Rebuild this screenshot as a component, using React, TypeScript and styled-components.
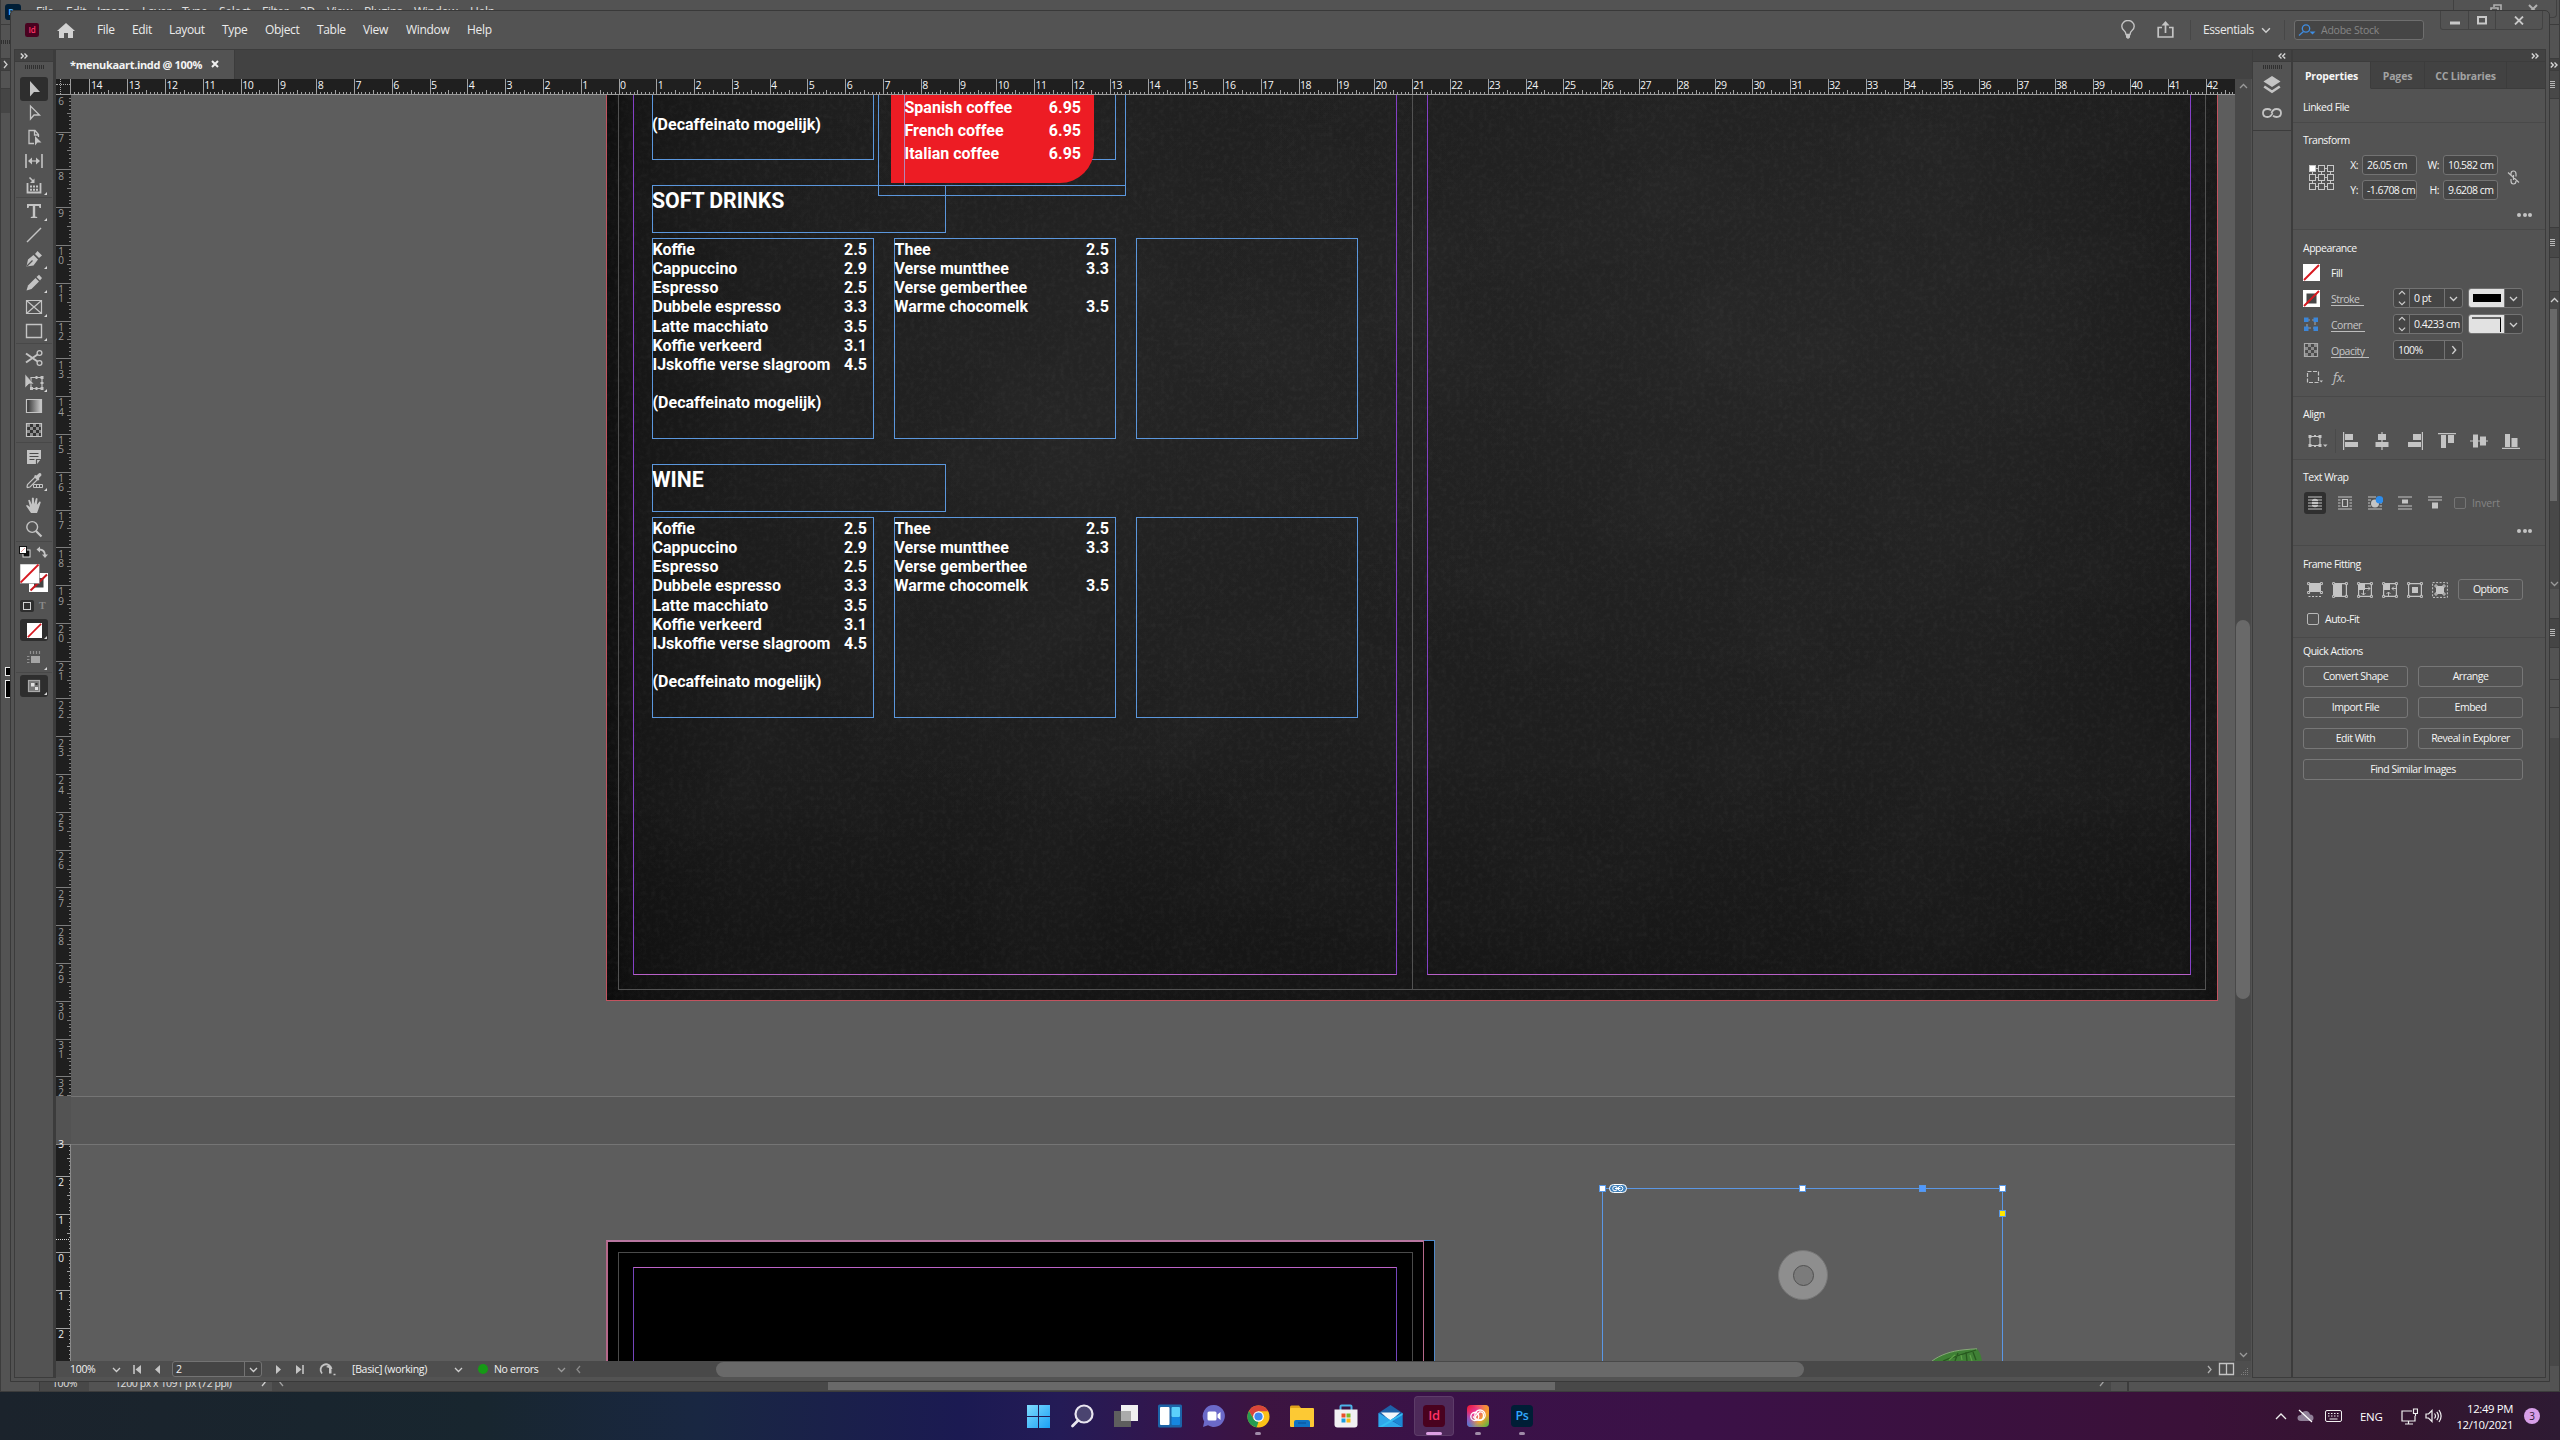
import React from 'react';
import styled, { createGlobalStyle, css } from 'styled-components';

const UI = `"Open Sans", "Noto Sans", sans-serif`;
const LINE = '#3c3c3c';
const PANEL = '#535353';
const DARK = '#424242';
const GLYPH = '#c4c4c4';
const BLUE = '#5b97dd';
const CM = 37.795;

const Global = createGlobalStyle`
  html, body { margin: 0; padding: 0; background: #1a2230; }
  body { width: 2560px; height: 1440px; overflow: hidden; font-family: ${UI}; }
  *, *::before, *::after { box-sizing: border-box; }
  svg { display: block; flex: none; }
`;

const Desktop = styled.div`
  position: relative;
  width: 2560px;
  height: 1440px;
  overflow: hidden;
  display: flex;
  flex-direction: column;
`;

/* ---------- shared ---------- */

const Ico = ({ w = 18, h, vb, children }: { w?: number; h?: number; vb?: string; children: React.ReactNode }) => (
  <svg width={w} height={h ?? w} viewBox={vb ?? `0 0 ${w} ${h ?? w}`} fill="none" stroke={GLYPH} strokeWidth="1.2">
    {children}
  </svg>
);

const Chevron = ({ dir = 'down', w = 9, color = '#cfcfcf' }: { dir?: 'down' | 'up' | 'left' | 'right'; w?: number; color?: string }) => {
  const d = { down: 'M1 3l3.5 3.5L8 3', up: 'M1 6l3.5-3.5L8 6', left: 'M6 1L3 4.5 6 8', right: 'M3 1l3 3.5L3 8' }[dir];
  return (
    <svg width={w} height={w} viewBox="0 0 9 9" fill="none" stroke={color} strokeWidth="1.3">
      <path d={d} />
    </svg>
  );
};

const DoubleChevron = ({ flip = false }: { flip?: boolean }) => (
  <svg width="8" height="6" viewBox="0 0 8 6" fill="none" stroke="#d6d6d6" strokeWidth="1.4">
    <path d={flip ? 'M3.5 .5L1 3l2.5 2.5M7.2 .5L4.7 3l2.5 2.5' : 'M.8 .5L3.3 3 .8 5.5M4.5 .5L7 3 4.5 5.5'} />
  </svg>
);

const Gripper = styled.div`
  width: 19px;
  height: 4px;
  background: repeating-linear-gradient(90deg, #2f2f2f 0 1px, transparent 1px 2px);
`;

/* ---------- background window ---------- */

const PsWindow = styled.div`
  height: 1392px;
  background: ${PANEL};
  border: 1px solid ${LINE};
  border-top: 0;
  display: flex;
  flex-direction: column;
`;
const PsTop = styled.div`
  height: 24px;
  display: flex;
  align-items: center;
  padding-left: 4px;
  color: #e0e0e0;
  font-size: 12px;
  letter-spacing: -0.3px;
  line-height: 24px;
`;
const PsLogo = styled.div`
  width: 16px;
  height: 16px;
  border-radius: 3px;
  background: #001e36;
  color: #4ba9f5;
  font: 700 9px/16px ${UI};
  text-align: center;
  margin-right: 15px;
`;
const PsItem = styled.span<{ $w: number }>`
  width: ${(p) => p.$w}px;
  flex: none;
`;
const PsButtons = styled.div`
  margin: 0 2px 6px auto;
  width: 104px;
  height: 18px;
  border: 1px solid #414141;
  border-top: 0;
  border-radius: 0 0 4px 4px;
  display: grid;
  grid-template-columns: 28px 27px 1fr;
  svg { margin: 4px auto 0; }
`;
const PsMiddle = styled.div`
  flex: 1;
  display: flex;
  justify-content: space-between;
`;
const PsStrip = styled.div`
  width: 9px;
  display: flex;
  flex-direction: column;
`;
const Seg = styled.div<{ $h?: number; $bg?: string; $line?: boolean }>`
  ${(p) => (p.$h ? `height: ${p.$h}px; flex: none;` : 'flex: 1;')}
  background: ${(p) => p.$bg ?? PANEL};
  ${(p) => p.$line && `border-top: 1px solid ${LINE};`}
  display: flex;
  align-items: center;
  overflow: hidden;
`;
const Burger = styled.div`
  width: 5px;
  height: 8px;
  background: repeating-linear-gradient(#b8b8b8 0 1px, transparent 1px 2px);
`;
const PsThumb = styled.div`
  width: 7px;
  height: 192px;
  background: #696969;
`;
const PsColorChip = styled.div<{ $h: number }>`
  width: 5px;
  height: ${(p) => p.$h}px;
  margin-left: auto;
  background: #000;
  border: 1px solid #e8e8e8;
  border-right: 0;
`;
const PsBottom = styled.div`
  height: 25px;
  display: flex;
  align-items: flex-end;
  color: #e0e0e0;
  font-size: 10.5px;
  letter-spacing: -0.42px;
  white-space: nowrap;
  & > div { height: 16px; display: flex; align-items: center; padding-bottom: 1px; }
`;
const PsZoom = styled.div`
  width: 50px;
  margin-left: 38px;
  padding-left: 12px;
  background: #484848;
  border-left: 1px solid ${LINE};
`;
const PsInfo = styled.div`
  width: 183px;
  padding-left: 26px;
  justify-content: space-between;
  padding-right: 4px;
`;
const PsTrack = styled.div`
  width: 1839px;
  background: #484848;
  padding-left: 5px;
  justify-content: space-between;
  padding-right: 5px;
`;
const PsTrackThumb = styled.div`
  width: 727px;
  height: 15px;
  margin: 0 auto 0 542px;
  background: #696969;
`;
const PsFooterIcons = styled.div`
  flex: 1;
  justify-content: flex-end;
  gap: 14px;
  padding-right: 28px;
  padding-bottom: 10px !important;
  margin-left: 16px;
  border-left: 2px solid ${LINE};
`;

/* ---------- foreground window ---------- */

const Window = styled.div`
  position: absolute;
  left: 10px;
  top: 10px;
  width: 2540px;
  height: 1372px;
  background: ${PANEL};
  border: 1px solid #393939;
  border-radius: 4px 5px 0 0;
  display: flex;
  flex-direction: column;
`;
const TitleBar = styled.div`
  height: 38px;
  display: flex;
  align-items: center;
  padding: 0 0 1px 14px;
`;
const AppBadge = styled.div<{ $s: number; $bg: string; $fg: string; $f: number }>`
  width: ${(p) => p.$s}px;
  height: ${(p) => p.$s}px;
  border-radius: ${(p) => p.$s / 6}px;
  background: ${(p) => p.$bg};
  color: ${(p) => p.$fg};
  font: 600 ${(p) => p.$f}px/${(p) => p.$s - 1}px ${UI};
  letter-spacing: -0.3px;
  text-align: center;
  flex: none;
`;
const HomeIcon = styled.svg`
  margin: 1px 22px 0 18px;
`;
const MenuItem = styled.span<{ $w: number }>`
  width: ${(p) => p.$w}px;
  flex: none;
  color: #ececec;
  font-size: 12px;
  letter-spacing: -0.33px;
`;
const TitleRight = styled.div`
  margin-left: auto;
  display: flex;
  align-items: center;
  height: 37px;
`;
const ShareSlot = styled.div`
  margin-left: 22px;
`;
const Divider = styled.div<{ $m: string }>`
  width: 1px;
  height: 20px;
  background: #474747;
  margin: ${(p) => p.$m};
`;
const Workspace = styled.span`
  font-size: 12px;
  letter-spacing: -0.4px;
  color: #e8e8e8;
  width: 58px;
`;
const StockSearch = styled.div`
  width: 130px;
  height: 20px;
  border: 1px solid #6e6e6e;
  border-radius: 3px;
  background: #454545;
  color: #858585;
  font-size: 10.5px;
  letter-spacing: -0.25px;
  display: flex;
  align-items: center;
  gap: 5px;
  padding-left: 3px;
`;
const WinButtons = styled.div`
  align-self: flex-start;
  margin: 0 6px 0 16px;
  width: 103px;
  height: 19px;
  border: 1px solid #434343;
  border-top: 0;
  border-radius: 0 0 3px 3px;
  display: grid;
  grid-template-columns: 28px 27px 1fr;
  & > div { display: flex; align-items: center; justify-content: center; border-right: 1px solid #434343; }
  & > div:last-child { border-right: 0; }
`;
const Body = styled.div`
  height: 1329px;
  display: flex;
  padding-left: 3px;
`;

/* tools */
const ToolColumn = styled.div`
  width: 40px;
  border: 1px solid ${LINE};
  display: flex;
  flex-direction: column;
`;
const ColumnHeader = styled.div<{ $align?: string; $pad?: string }>`
  height: 12px;
  flex: none;
  background: ${DARK};
  border-bottom: 1px solid ${LINE};
  display: flex;
  align-items: center;
  justify-content: ${(p) => p.$align ?? 'flex-start'};
  padding: ${(p) => p.$pad ?? '0 5px'};
`;
const GripRow = styled.div`
  height: 15px;
  display: flex;
  justify-content: center;
  padding-top: 3px;
`;
const ToolGroup = styled.div`
  display: flex;
  flex-direction: column;
  align-items: center;
`;
const ToolRule = styled.div<{ $h?: number }>`
  height: ${(p) => p.$h ?? 3}px;
  margin: 0 1px;
  border-top: 1px solid #484848;
`;
const Tool = styled.div<{ $on?: boolean; $sub?: boolean; $h?: number }>`
  position: relative;
  width: 28px;
  height: ${(p) => p.$h ?? 24}px;
  display: flex;
  align-items: center;
  justify-content: center;
  ${(p) => p.$on && css`background: #2e2e2e; border-radius: 3px;`}
  ${(p) => p.$sub && css`
    &::after {
      content: '';
      position: absolute;
      right: 1px;
      bottom: 2px;
      border-left: 3px solid transparent;
      border-bottom: 3px solid #d8d8d8;
    }
  `}
`;
const SwapRow = styled.div`
  display: flex;
  justify-content: space-between;
  padding: 2px 5px 0 4px;
  height: 20px;
`;
const FillStroke = styled.div`
  width: 28px;
  height: 28px;
  margin: 0 auto;
`;
const ModeRow = styled.div`
  display: flex;
  width: 28px;
  margin: 8px auto 7px;
  align-items: center;
  gap: 3px;
`;
const ModeBox = styled.div`
  width: 14px;
  height: 12px;
  border-radius: 2px;
  background: #2e2e2e;
  display: grid;
  place-items: center;
`;
const TLetter = styled.span`
  font: 700 10px/12px "Liberation Serif", serif;
  color: #8a8a8a;
  padding-left: 2px;
`;

/* document */
const Doc = styled.div`
  width: 2198px;
  border-left: 2px solid ${LINE};
  border-top: 1px solid ${LINE};
  display: flex;
  flex-direction: column;
`;
const TabBar = styled.div`
  height: 29px;
  background: ${DARK};
  display: flex;
`;
const DocTab = styled.div`
  width: 179px;
  background: ${PANEL};
  border-right: 1px solid ${LINE};
  color: #f4f4f4;
  font-weight: 700;
  font-size: 11px;
  letter-spacing: -0.35px;
  display: flex;
  align-items: center;
  gap: 9px;
  padding: 0 0 1px 14px;
`;
const View = styled.div`
  display: grid;
  grid-template-columns: 15px 2164px 16px;
  grid-template-rows: 16px 1266px 16px;
  width: 2195px;
`;
const RulerCorner = styled.div`
  background: #1f1f1f;
  border-right: 1px solid #9a9a9a;
  border-bottom: 1px solid #9a9a9a;
  position: relative;
  &::before { content: ''; position: absolute; left: 0; right: 0; top: 5px; border-top: 1px dotted #a8a8a8; }
  &::after { content: ''; position: absolute; top: 0; bottom: 0; left: 4px; border-left: 1px dotted #a8a8a8; }
`;
const HRuler = styled.div`
  position: relative;
  background: #1f1f1f;
  overflow: hidden;
  border-bottom: 1px solid #9a9a9a;
`;
const Ticks = styled.svg`
  position: absolute;
  left: 0;
  top: 0;
`;
const HLabels = styled.div`
  display: flex;
  margin-left: 18px;
`;
const HLabel = styled.span`
  width: ${CM}px;
  flex: none;
  padding-left: 2px;
  font-size: 10.5px;
  line-height: 12px;
  letter-spacing: -0.5px;
  font-weight: 500;
  color: #f4f4f4;
`;
const VRuler = styled.div`
  position: relative;
  overflow: hidden;
  background: #1f1f1f;
`;
const VLabel = styled.span<{ $bright?: boolean }>`
  position: absolute;
  left: 2px;
  width: 6px;
  font-size: 10px;
  line-height: 9.2px;
  text-align: center;
  color: ${(p) => (p.$bright ? '#f0f0f0' : '#9c9c9c')};
  word-break: break-all;
`;
const VScroll = styled.div`
  grid-row: 1 / 3;
  grid-column: 3;
  background: #494949;
  display: flex;
  flex-direction: column;
  align-items: center;
  padding: 3px 0 2px;
`;
const VThumb = styled.div`
  width: 14px;
  height: 379px;
  margin: 529px 0 auto;
  border-radius: 7px;
  background: #696969;
`;
const Status = styled.div`
  grid-column: 1 / 4;
  display: flex;
  align-items: center;
  background: #4e4e4e;
  color: #f2f2f2;
  font-size: 10.5px;
  font-weight: 500;
  letter-spacing: -0.3px;
`;
const Cell = styled.div<{ $w: number }>`
  width: ${(p) => p.$w}px;
  flex: none;
  display: flex;
  align-items: center;
`;
const PageField = styled.div`
  width: 90px;
  height: 16px;
  border: 1px solid #737373;
  border-radius: 3px;
  background: #454545;
  display: flex;
  align-items: center;
  justify-content: space-between;
  padding-left: 3px;
`;
const PageDrop = styled.div`
  width: 17px;
  height: 14px;
  border-left: 1px solid #737373;
  display: grid;
  place-items: center;
`;
const Ok = styled.i`
  width: 10px;
  height: 10px;
  border-radius: 5px;
  background: #169a16;
  margin-right: 6px;
`;
const HTrack = styled.div`
  flex: 1;
  height: 16px;
  background: #494949;
  display: flex;
  align-items: center;
  padding: 0 4px;
`;
const HThumb = styled.div`
  width: 1088px;
  height: 15px;
  margin: 0 auto 0 133px;
  border-radius: 8px;
  background: #696969;
`;

/* canvas */
const Canvas = styled.div`
  position: relative;
  overflow: hidden;
  background: #5d5d5d;
`;
const Board = styled.div`
  position: absolute;
  left: -71px;
  top: -95px;
  width: 2560px;
  height: 1440px;
`;
interface Box { $x: number; $y: number; $w: number; $h: number }
const at = css<Box>`
  position: absolute;
  left: ${(p) => p.$x}px;
  top: ${(p) => p.$y}px;
  width: ${(p) => p.$w}px;
  height: ${(p) => p.$h}px;
`;
const SpreadGap = styled.div`
  ${at}
  background: #575757;
  border: solid #757575;
  border-width: 1px 0;
`;
const Slate = styled.div<Box>`
  ${at}
  overflow: hidden;
  background:
    linear-gradient(180deg, transparent 74%, rgba(8, 8, 8, 0.4) 100%),
    radial-gradient(ellipse 600px 420px at 1180px 260px, rgba(46, 46, 46, 0.5), transparent),
    radial-gradient(ellipse 420px 460px at 500px 320px, rgba(46, 46, 46, 0.45), transparent),
    linear-gradient(90deg, #0e0e0e 0, #161616 24px, #1c1c1c 130px, #1e1e1e 50%, #1f1f1f 85%, #1a1a1a 97%, #161616 100%);
`;
const BlackPage = styled.div`
  ${at}
  background: #000;
`;
const Guide = styled.div<Box & { $c: string; $v?: string; $bw?: string }>`
  ${at}
  border: 1px solid ${(p) => p.$c};
  ${(p) => p.$v && `border-bottom-color: ${p.$v}; border-top-color: ${p.$v};`}
  ${(p) => p.$bw && `border-width: ${p.$bw};`}
`;
const Frame = styled.div<Box>`
  ${at}
  border: 1px solid ${BLUE};
  color: #fff;
  font: 700 16px/19.2px Roboto, sans-serif;
  padding-top: 0.8px;
`;
const Heading = styled.div`
  font: 700 21.33px/25.6px Roboto, sans-serif;
  letter-spacing: -0.08px;
  margin-left: -1px;
  padding-top: 1px;
`;
const Line = styled.div`
  display: flex;
  justify-content: space-between;
  height: 19.2px;
  padding-right: 6px;
  white-space: nowrap;
  margin-left: -0.5px;
`;
const LooseLine = styled.div`
  color: #fff;
  font: 700 16px/19.2px Roboto, sans-serif;
`;
const RedCard = styled.div`
  ${at}
  background: #ed1c24;
  border-bottom-right-radius: 34px;
`;
const CoffeeList = styled.div`
  ${at}
  border: 1px solid ${BLUE};
  border-left-color: #b586b6;
  color: #fff;
  font: 700 16px/23px Roboto, sans-serif;
  padding: 0 44px 20px 0;
  display: flex;
  flex-direction: column;
  justify-content: flex-end;
`;
const CoffeeRow = styled.div`
  display: flex;
  justify-content: space-between;
  margin-left: -0.5px;
`;
const Handle = styled.div<{ $x: number; $y: number; $c?: string }>`
  position: absolute;
  left: ${(p) => p.$x - 3.5}px;
  top: ${(p) => p.$y - 3.5}px;
  width: 7px;
  height: 7px;
  background: ${(p) => p.$c ?? '#fff'};
  border: 1px solid #5797e6;
`;
const Donut = styled.div`
  ${at}
  border-radius: 50%;
  background: #8e8e8e;
  border: 1px solid #777;
  display: grid;
  place-items: center;
  &::after { content: ''; width: 21px; height: 21px; border-radius: 50%; background: #7b7b7b; border: 1px solid #505050; }
`;
const Floating = styled.div`
  ${at}
`;

/* dock */
const Dock = styled.div`
  width: 39px;
  border: 1px solid ${LINE};
  border-right: 0;
`;
const DockIcons = styled.div`
  height: 69px;
  border-bottom: 1px solid ${LINE};
  display: flex;
  flex-direction: column;
  align-items: center;
  padding-top: 3px;
`;
const DockIcon = styled.div<{ $mt: number }>`
  height: 20px;
  display: grid;
  place-items: center;
  margin-top: ${(p) => p.$mt}px;
`;
const Panel = styled.div`
  width: 255px;
  border: 1px solid ${LINE};
  border-left: 2px solid ${LINE};
  color: #f6f6f6;
  font-size: 10.5px;
  font-weight: 500;
  letter-spacing: -0.5px;
  display: flex;
  flex-direction: column;
`;
const Tabs = styled.div`
  height: 27px;
  display: flex;
  background: ${DARK};
`;
const Tab = styled.div<{ $w: number; $on?: boolean }>`
  width: ${(p) => p.$w}px;
  display: flex;
  align-items: center;
  justify-content: center;
  padding-top: 1px;
  font-weight: 700;
  font-size: 10.5px;
  letter-spacing: -0.15px;
  color: ${(p) => (p.$on ? '#f6f6f6' : '#a3a3a3')};
  background: ${(p) => (p.$on ? PANEL : 'transparent')};
  border-right: 1px solid ${LINE};
  border-bottom: 1px solid ${(p) => (p.$on ? PANEL : LINE)};
`;
const TabRest = styled.div`
  flex: 1;
  border-bottom: 1px solid ${LINE};
`;
const Section = styled.section<{ $h: number; $last?: boolean }>`
  height: ${(p) => p.$h}px;
  padding-left: 10px;
  ${(p) => !p.$last && 'border-bottom: 1px solid #494949;'}
  flex: none;
`;
const Title = styled.div<{ $h: number; $c?: number }>`
  height: ${(p) => p.$h}px;
  line-height: ${(p) => (p.$c ?? 17) * 2}px;
`;
const TransformGrid = styled.div`
  display: grid;
  grid-template-columns: 45px 14px 56px 25px 56px 8px 14px;
  grid-template-rows: 20px 20px;
  row-gap: 5px;
  align-items: center;
`;
const Span2 = styled.div<{ $col: number; $pl?: number }>`
  grid-row: 1 / 3;
  grid-column: ${(p) => p.$col};
  padding-left: ${(p) => p.$pl ?? 0}px;
`;
const Lbl = styled.span<{ $col: number; $row: number }>`
  grid-column: ${(p) => p.$col};
  grid-row: ${(p) => p.$row};
  text-align: right;
  padding-right: 4px;
`;
const Field = styled.div<{ $col: number; $row: number }>`
  grid-column: ${(p) => p.$col};
  grid-row: ${(p) => p.$row};
  width: 55px;
  height: 20px;
  border: 1px solid #737373;
  border-radius: 3px;
  background: #454545;
  display: flex;
  align-items: center;
  padding-left: 4px;
  letter-spacing: -0.55px;
  white-space: nowrap;
`;
const Dots = styled.div<{ $pt?: number }>`
  height: 30px;
  padding-top: ${(p) => p.$pt ?? 0}px;
  display: flex;
  align-items: center;
  justify-content: flex-end;
  gap: 1.5px;
  padding-right: 13px;
  i { width: 4px; height: 4px; border-radius: 2px; background: ${GLYPH}; }
`;
const AttrRow = styled.div`
  height: 26px;
  display: flex;
  align-items: center;
`;
const AttrIcon = styled.div`
  width: 28px;
`;
const AttrName = styled.div<{ $u?: number }>`
  width: 62px;
  color: ${(p) => (p.$u ? '#c6c6c6' : '#f6f6f6')};
  & > span {
    display: block;
    width: ${(p) => p.$u ?? 20}px;
    line-height: 12px;
    padding-top: 2px;
    ${(p) => p.$u && 'border-bottom: 1px solid #bdbdbd;'}
  }
`;
const Combo = styled.div<{ $w: number }>`
  width: ${(p) => p.$w}px;
  height: 20px;
  border: 1px solid #737373;
  border-radius: 3px;
  background: #454545;
  display: flex;
  align-items: stretch;
  margin-right: 5px;
  flex: none;
  overflow: hidden;
`;
const Spin = styled.div`
  width: 16px;
  border-right: 1px solid #737373;
  display: flex;
  flex-direction: column;
  align-items: center;
  justify-content: space-between;
`;
const Value = styled.div`
  flex: 1;
  padding-left: 4px;
  line-height: 18px;
  white-space: nowrap;
`;
const Drop = styled.div`
  width: 18px;
  border-left: 1px solid #737373;
  display: grid;
  place-items: center;
`;
const Preview = styled.div`
  flex: 1;
  background: #e2e2e2;
  display: flex;
  justify-content: center;
  align-items: center;
`;
const BlackBar = styled.div`
  width: 28px;
  height: 8px;
  background: #000;
`;
const CornerSample = styled.div`
  width: 29px;
  height: 15px;
  border-top: 2px solid #666;
  border-right: 1px solid #000;
`;
const IconStrip = styled.div<{ $h: number; $cols: string }>`
  height: ${(p) => p.$h}px;
  display: grid;
  grid-template-columns: ${(p) => p.$cols};
  align-items: center;
  justify-items: center;
`;
const AlignStrip = styled.div`
  height: 32px;
  display: grid;
  grid-template-columns: 35px 31px 33px 32px 32px 32px 18px;
  align-items: center;
  padding-left: 4px;
`;
const AlignRef = styled.div`
  width: 29px;
  height: 24px;
  display: flex;
  align-items: center;
  border-right: 1px solid #4a4a4a;
`;
const WrapBtn = styled.div<{ $on?: boolean }>`
  width: 22px;
  height: 22px;
  border-radius: 3px;
  background: ${(p) => (p.$on ? '#2f2f2f' : 'transparent')};
  display: grid;
  place-items: center;
`;
const Check = styled.i<{ $dim?: boolean }>`
  width: 12px;
  height: 12px;
  border: 1px solid ${(p) => (p.$dim ? '#757575' : '#b8b8b8')};
  border-radius: 2px;
`;
const Muted = styled.span`
  color: #858585;
  justify-self: start;
  letter-spacing: -0.1px;
`;
const AutoFit = styled.div`
  height: 38px;
  display: flex;
  align-items: center;
  gap: 6px;
  padding: 0 0 0 4px;
`;
const Btn = styled.button<{ $wide?: boolean }>`
  height: 21px;
  padding: 0;
  border: 1px solid #777;
  border-radius: 3px;
  background: transparent;
  color: #f6f6f6;
  font: 500 10.5px/19px ${UI};
  letter-spacing: -0.5px;
  ${(p) => p.$wide && 'grid-column: 1 / 3;'}
`;
const OptionsBtn = styled(Btn)`
  width: 65px;
  justify-self: end;
`;
const FxMark = styled.span`
  font: italic 400 13px/16px "Open Sans", sans-serif;
  color: #c0c0c0;
  letter-spacing: -0.3px;
  padding: 1px 0 0 2px;
`;
const BtnGrid = styled.div`
  display: grid;
  grid-template-columns: 105px 105px;
  gap: 10px;
`;

/* taskbar */
const Taskbar = styled.div`
  height: 48px;
  display: grid;
  grid-template-columns: 1fr auto 1fr;
  background: linear-gradient(90deg, #1b232c 0, #18262f 480px, #192742 700px, #1b1a52 960px, #241b56 1060px, #37144a 1200px, #3c1440 1260px, #3a1248 1420px, #3b1147 1700px, #3a1138 2200px, #33152f 2400px, #2e1a33 2560px);
`;
const AppRow = styled.div`
  grid-column: 2;
  display: flex;
`;
const AppSlot = styled.div<{ $active?: boolean; $run?: boolean }>`
  position: relative;
  width: 40px;
  height: 40px;
  margin: 4px 2px;
  display: grid;
  place-items: center;
  ${(p) => p.$active && css`background: rgba(255, 255, 255, 0.1); border: 1px solid rgba(255, 255, 255, 0.09); border-radius: 4px;`}
  ${(p) => (p.$active || p.$run) && css`
    &::after {
      content: '';
      position: absolute;
      bottom: ${p.$active ? 0 : 1}px;
      width: ${p.$active ? 16 : 6}px;
      height: 3px;
      border-radius: 2px;
      background: ${p.$active ? '#dda0e4' : '#a08ba8'};
    }
  `}
`;
const Tray = styled.div`
  grid-column: 3;
  justify-self: end;
  display: grid;
  grid-template-columns: 22px 28px 35px 41px 24px 28px 60px 11px 16px;
  align-items: center;
  padding-right: 20px;
  color: #fff;
  font-size: 11.5px;
  letter-spacing: -0.3px;
`;
const Clock = styled.div`
  text-align: right;
  line-height: 16px;
  font-size: 11.3px;
  letter-spacing: -0.34px;
  padding-top: 1px;
  white-space: nowrap;
`;
const Badge = styled.div`
  grid-column: 9;
  width: 16px;
  height: 16px;
  border-radius: 8px;
  background: #d79fe8;
  color: #2b1530;
  font-size: 10px;
  line-height: 16px;
  text-align: center;
`;

/* ---------- data ---------- */

const MENU: [string, number][] = [['File', 35], ['Edit', 37], ['Layout', 53], ['Type', 43], ['Object', 52], ['Table', 46], ['View', 43], ['Window', 61], ['Help', 30]];
const PS_MENU: [string, number][] = [['File', 30], ['Edit', 31], ['Image', 45], ['Layer', 40], ['Type', 37], ['Select', 43], ['Filter', 38], ['3D', 27], ['View', 37], ['Plugins', 50], ['Window', 56], ['Help', 30]];
const COL_A: [string, string][] = [['Koffie', '2.5'], ['Cappuccino', '2.9'], ['Espresso', '2.5'], ['Dubbele espresso', '3.3'], ['Latte macchiato', '3.5'], ['Koffie verkeerd', '3.1'], ['IJskoffie verse slagroom', '4.5'], ['', ''], ['(Decaffeinato mogelijk)', '']];
const COL_B: [string, string][] = [['Thee', '2.5'], ['Verse muntthee', '3.3'], ['Verse gemberthee', ''], ['Warme chocomelk', '3.5']];
const COFFEES: [string, string][] = [['Spanish coffee', '6.95'], ['French coffee', '6.95'], ['Italian coffee', '6.95']];

/* ---------- pieces ---------- */

const hTicks = () => {
  let d = '';
  for (let i = -145; i <= 427; i++) {
    const x = Math.round(547.5 + (i * CM) / 10) + 0.5;
    if (x < 0) continue;
    const len = i % 10 === 0 ? 15 : i % 5 === 0 ? 4 : 2;
    d += `M${x} ${15 - len}V15`;
  }
  return d;
};
const vTicks = (zero: number, from: number, to: number) => {
  let d = '';
  for (let i = from; i <= to; i++) {
    const y = Math.round(zero + (i * CM) / 10) + 0.5;
    const len = i % 10 === 0 ? 15 : i % 5 === 0 ? 4 : 2;
    d += `M${15 - len} ${y}H15`;
  }
  return d;
};
const V0 = -133 - 95;
const V1 = 1252 - 95;

const VerticalRuler = () => (
  <VRuler>
    <Ticks width="15" height="1266">
      <path d={vTicks(V0, 60, 325)} stroke="#7d7d7d" />
    </Ticks>
    {Array.from({ length: 27 }, (_, k) => k + 6).map((n) => (
      <VLabel key={n} style={{ top: Math.max(2, V0 + n * CM + 2.3) }}>{n}</VLabel>
    ))}
    <Ticks width="15" height="1266">
      <rect x="0" y="1001" width="15" height="48" fill="#535353" />
      <path d={vTicks(V1, -28, 28)} stroke="#a2a2a2" />
      <path d="M0 1049.5H15" stroke="#8a8a8a" />
      <path d="M0 1144.5H15" stroke="#ddd" strokeDasharray="1 1" />
      <path d="M14.5 1049V1266" stroke="#8a8a8a" />
    </Ticks>
    {[-3, -2, -1, 0, 1, 2].map((n) => (
      <VLabel key={n} $bright style={{ top: n === -3 ? 1045 : V1 + n * CM + 2 }}>{Math.abs(n)}</VLabel>
    ))}
  </VRuler>
);

const MenuList = ({ x, y, rows }: { x: number; y: number; rows: [string, string][] }) => (
  <Frame $x={x} $y={y} $w={222} $h={201}>
    {rows.map(([a, b], i) => (
      <Line key={i}><span>{a}</span><span>{b}</span></Line>
    ))}
  </Frame>
);

const MenuBlock = ({ y, title }: { y: number; title: string }) => (
  <>
    <Frame $x={652} $y={y} $w={294} $h={48}><Heading>{title}</Heading></Frame>
    <MenuList x={652} y={y + 53} rows={COL_A} />
    <MenuList x={894} y={y + 53} rows={COL_B} />
    <MenuList x={1136} y={y + 53} rows={[]} />
  </>
);

const Artwork = () => (
  <Board>
    <SpreadGap $x={71} $y={1096} $w={2164} $h={49} />
    <Slate $x={606} $y={60} $w={1612} $h={941}>
      <svg width="1612" height="941">
        <filter id="grain">
          <feTurbulence type="fractalNoise" baseFrequency="0.22" numOctaves="3" seed="4" />
          <feColorMatrix values="0 0 0 0 1  0 0 0 0 1  0 0 0 0 1  1.2 0 0 0 -0.5" />
        </filter>
        <filter id="stain">
          <feTurbulence type="fractalNoise" baseFrequency="0.008 0.009" numOctaves="4" seed="9" />
          <feColorMatrix values="0 0 0 0 1  0 0 0 0 1  0 0 0 0 1  1.2 0 0 0 -0.45" />
        </filter>
        <rect width="1612" height="941" filter="url(#grain)" opacity="0.06" stroke="none" />
        <rect width="1612" height="941" filter="url(#stain)" opacity="0.018" stroke="none" />
      </svg>
    </Slate>
    <Guide $x={606} $y={60} $w={1612} $h={941} $c="#c2535f" />
    <Guide $x={618} $y={60} $w={795} $h={930} $c="#525252" />
    <Guide $x={1412} $y={60} $w={794} $h={930} $c="#525252" />
    <Guide $x={633} $y={60} $w={764} $h={915} $c="#8440c6" $v="#b860c8" />
    <Guide $x={1427} $y={60} $w={764} $h={915} $c="#8440c6" $v="#b860c8" />

    <Frame $x={652} $y={60} $w={222} $h={100} />
    <Floating $x={652} $y={114.7} $w={222} $h={20}>
      <LooseLine>(Decaffeinato mogelijk)</LooseLine>
    </Floating>
    <Frame $x={894} $y={60} $w={222} $h={100} />
    <RedCard $x={891} $y={60} $w={203} $h={123} />
    <Frame $x={878} $y={60} $w={248} $h={136} />
    <CoffeeList $x={904} $y={60} $w={222} $h={126}>
      {COFFEES.map(([a, b]) => (
        <CoffeeRow key={a}><span>{a}</span><span>{b}</span></CoffeeRow>
      ))}
    </CoffeeList>
    <MenuBlock y={185} title="SOFT DRINKS" />
    <MenuBlock y={464} title="WINE" />

    <BlackPage $x={606} $y={1241} $w={828} $h={180} />
    <Guide $x={606} $y={1240} $w={829} $h={180} $c="#5088c8" />
    <Guide $x={606} $y={1240} $w={818} $h={180} $c="#b5688a" $v="#b876a0" $bw="2px 1px 1px 2px" />
    <Guide $x={618} $y={1252} $w={795} $h={180} $c="#4a4a4a" />
    <Guide $x={633} $y={1267} $w={764} $h={180} $c="#7445bc" $v="#bd62c8" />

    <Guide $x={1602} $y={1188} $w={401} $h={200} $c="#5b97e4" />
    <Handle $x={1602.5} $y={1188.5} />
    <Handle $x={1802.5} $y={1188.5} />
    <Handle $x={1922.5} $y={1188.5} $c="#4f98ff" />
    <Handle $x={2002.5} $y={1188.5} />
    <Handle $x={2002.5} $y={1213.5} $c="#ffe600" />
    <Floating $x={1609} $y={1184} $w={18} $h={9}>
      <svg width="18" height="9" viewBox="0 0 18 9" fill="none">
        <rect x=".5" y=".5" width="17" height="8" rx="4" fill="#3f7fb8" stroke="#fff" />
        <circle cx="6" cy="4.5" r="2.3" stroke="#fff" />
        <circle cx="11.5" cy="4.5" r="2.3" stroke="#fff" />
        <path d="M6 4.5h5.5" stroke="#fff" />
      </svg>
    </Floating>
    <Donut $x={1778} $y={1250} $w={50} $h={50} />
    <Floating $x={1931} $y={1348} $w={54} $h={14}>
      <svg width="54" height="14" viewBox="0 0 54 14">
        <path d="M0 14C9 7 20 3 33 1.8Q40 1 46 .8C49 4 50.500 8 51 14z" fill="#3f8035" />
        <path d="M1 13C9 7 20 3 33 1.8Q40 1 46 .8" stroke="#86a878" strokeWidth="1" fill="none" />
        <path d="M12 13C24 8 36 5 45 2M24 13l3-8M36 13l-1-9M45 12L42 4" stroke="#28591f" strokeWidth="1.3" fill="none" />
        <path d="M18 12l6-5M31 12l-1-5M41 13l-2-6" stroke="#5fa348" strokeWidth="1.2" fill="none" />
      </svg>
    </Floating>
  </Board>
);

const Scissors = () => (
  <Ico w={18}><g strokeWidth="1.3"><circle cx="14.5" cy="4" r="2.4" /><circle cx="14.5" cy="14" r="2.4" /></g><path d="M1 4.5L12.5 12.500M1 13.500L12.500 5.500" strokeWidth="2" /></Ico>
);

const TOOL_SETS: { sub?: boolean; on?: boolean; icon: React.ReactNode }[][] = [
  [
    { on: true, icon: <Ico w={18}><path d="M5 1v15.500l4-4.500h6z" fill={GLYPH} stroke="none" /></Ico> },
    { icon: <Ico w={18}><path d="M5.500 2v13l3.500-4h5.500z" strokeWidth="1.3" /></Ico> },
    { icon: <Ico w={18}><path d="M9 15.500H4v-13h6l3.500 4V9M9.500 2.500v4.500h4" strokeWidth="1.3" /><path d="M10 8v9.500l2.500-3h4z" fill={GLYPH} stroke="none" /></Ico> },
    { icon: <Ico w={18}><path d="M1 2v14M17 2v14" strokeWidth="1.6" /><path d="M4 9h10" /><path d="M7 5.500L3 9l4 3.500zM11 5.500L15 9l-4 3.500z" fill={GLYPH} stroke="none" /></Ico> },
    { sub: true, icon: <Ico w={18}><path d="M2.500 7v9.500h13V7" strokeWidth="1.8" /><path d="M5 9.500h2v2H5zM8 9.500h2v2H8zM11 9.500h2v2h-2zM5 12.700h2v2H5zM8 12.700h2v2H8zM11 12.700h2v2h-2z" fill={GLYPH} stroke="none" /><path d="M4.500 1.500l4 4" strokeWidth="1.6" /><path d="M9.500 2.500V7H5z" fill={GLYPH} stroke="none" /></Ico> },
  ],
  [
    { sub: true, icon: <Ico w={18}><path d="M2 2h14v4h-1.500l-.6-2H10.200v10.500l2 .5v1H5.800v-1l2-.5V4H4.100L3.500 6H2z" fill={GLYPH} stroke="none" /></Ico> },
    { icon: <Ico w={18}><path d="M2 16L16 2" strokeWidth="1.5" /></Ico> },
    { sub: true, icon: <Ico w={18}><path d="M1.500 16.500L3 9.500 8.500 5l4.500 4.500-4.500 6z" fill={GLYPH} stroke="none" /><path d="M2 16l5.500-5.500" stroke={PANEL} /><path d="M10 4l2.500-3 4.500 4.500-3 2.500z" fill={GLYPH} stroke="none" /></Ico> },
    { sub: true, icon: <Ico w={18}><path d="M1.500 16.500l1.500-5L10.500 4 14 7.500 6.500 15z" fill={GLYPH} stroke="none" /><path d="M11.500 3L14 .8 17 4l-2 2.500z" fill={GLYPH} stroke="none" /></Ico> },
    { sub: true, icon: <Ico w={18}><path d="M1.500 2.500h15v13h-15zM1.500 2.500l15 13M16.500 2.500l-15 13" /></Ico> },
    { sub: true, icon: <Ico w={18}><path d="M1.500 2.500h15v13h-15z" strokeWidth="1.4" /></Ico> },
  ],
  [
    { icon: <Scissors /> },
    { sub: true, icon: <Ico w={20} h={18}><path d="M7 4.500h11v11H7z" /><path d="M11.500 3h2v3h-2zM16.500 3h3v3h-3zM16.500 9h3v2h-3zM16.500 14h3v3h-3zM11.500 14h2v3h-2zM6 14h3v3H6z" fill={GLYPH} stroke="none" /><path d="M1 1v14l4-4h5z" fill={GLYPH} stroke={PANEL} strokeWidth=".6" /></Ico> },
    { icon: <Ico w={18}><defs><linearGradient id="tg"><stop offset="0" stopColor="#2e2e2e" /><stop offset="1" stopColor="#d0d0d0" /></linearGradient></defs><path d="M1.500 2.500h15v13h-15z" fill="url(#tg)" /></Ico> },
    { icon: <Ico w={18}><path d="M1.500 2.500h15v13h-15z" fill="#333" /><path d="M2 3h3v3H2zM8 3h3v3H8zM14 3h2v3h-2zM5 6h3v3H5zM11 6h3v3h-3zM2 9h3v3H2zM8 9h3v3H8zM14 9h2v3h-2zM5 12h3v3H5zM11 12h3v3h-3z" fill="#8d8d8d" stroke="none" /></Ico> },
  ],
  [
    { icon: <Ico w={18}><path d="M2 2h14v9l-4 5H2z" fill={GLYPH} stroke="none" /><path d="M4.500 5.500h9M4.500 8.500h9M4.500 11.500h5" stroke="#4a4a4a" /><path d="M11.500 16v-4.500H16" stroke={PANEL} /></Ico> },
    { sub: true, icon: <Ico w={18}><path d="M2 15l.5-2.500L10 5l2.500 2.500L5 15l-2.500.5z" /><path d="M9 4l1.500-1 1 .5L14 1.200q2.500-.5 2.500 2L14 6l.3 1.400L13 8.800z" fill={GLYPH} stroke="none" /><path d="M8.500 12.500h9v3h-9zM11.500 12.500v3M14.500 12.500v3" strokeWidth="1" /></Ico> },
    { icon: <Ico w={18}><path d="M6 17L1.200 10q0-1.500 1.800-.6L5 11 3.200 4.300q.9-1.300 1.800 0L6.700 8.500 6.900 2q1-1.200 1.900 0L9.300 8l1.500-5.500q1.200-.9 1.700.3L11.900 8.800 14.500 5.500q1.200-.3 1.200 1L13.500 13 12 17z" fill={GLYPH} stroke="none" /></Ico> },
    { icon: <Ico w={18}><circle cx="7.2" cy="7" r="5.4" strokeWidth="1.4" /><path d="M11 11l5.500 5.500" strokeWidth="2.2" /></Ico> },
  ],
];

const NoneSwatch = ({ s, inner = false }: { s: number; inner?: boolean }) => (
  <svg width={s} height={s} viewBox="0 0 17 17">
    <rect width="17" height="17" fill="#fff" />
    {inner && <rect x="3.500" y="3.500" width="10" height="10" fill="#474747" />}
    <path d="M1 16L16 1" stroke="#d71920" strokeWidth="1.9" />
  </svg>
);

const ToolsPanel = () => (
  <ToolColumn>
    <ColumnHeader><DoubleChevron /></ColumnHeader>
    <GripRow><Gripper /></GripRow>
    {TOOL_SETS.map((set, i) => (
      <React.Fragment key={i}>
        <ToolGroup>
          {set.map((t, k) => <Tool key={k} $on={t.on} $sub={t.sub}>{t.icon}</Tool>)}
        </ToolGroup>
        <ToolRule $h={i === 0 ? 2 : 3} />
      </React.Fragment>
    ))}
    <SwapRow>
      <svg width="12" height="12" viewBox="0 0 12 12"><rect x="4" y="4" width="7" height="7" fill="#111" stroke="#ddd" /><rect x=".5" y=".5" width="7" height="7" fill="#fff" stroke="#111" /><path d="M2 6l4-4" stroke="#e89a9a" /></svg>
      <svg width="12" height="12" viewBox="0 0 12 12" fill="none" stroke={GLYPH} strokeWidth="1.8"><path d="M3 3.500q6 0 6 6" /><path d="M4 .5v6L.5 3.500zM6 8.500h6L9 12z" fill={GLYPH} stroke="none" /></svg>
    </SwapRow>
    <FillStroke>
      <svg width="28" height="28" viewBox="0 0 28 28">
        <rect x="9" y="9" width="19" height="19" fill="#fff" />
        <rect x="14" y="14" width="9.500" height="9.500" fill="#444" />
        <path d="M10.500 26.500L27 10.500" stroke="#c8161d" strokeWidth="2" />
        <rect x="0" y="0" width="19.500" height="19.500" fill="#fff" stroke="#777" strokeWidth=".6" />
        <path d="M.5 18.500L18.500 .5" stroke="#d71920" strokeWidth="1.9" />
      </svg>
    </FillStroke>
    <ModeRow>
      <ModeBox><svg width="8" height="8"><rect x=".5" y=".5" width="7" height="7" fill="none" stroke="#d0d0d0" /></svg></ModeBox>
      <TLetter>T</TLetter>
    </ModeRow>
    <ToolGroup>
      <Tool $on $sub $h={22}><NoneSwatch s={15} /></Tool>
      <Tool $sub $h={31}>
        <Ico w={16} h={14}><path d="M5 6h9v7H5z" fill="#a5a5a5" stroke="none" /><path d="M4.500 1v3M7.500 1v3M10.500 1v3M13.500 1v3" stroke="#8f8f8f" /><path d="M1 6.500h2.500M1 9.500h2.500M1 12.500h2.500" stroke="#8f8f8f" /></Ico>
      </Tool>
    </ToolGroup>
    <ToolRule />
    <ToolGroup>
      <Tool $on $sub $h={22}>
        <Ico w={14}><rect x="1.500" y="1.500" width="11" height="11" fill="#777" stroke="#aaa" /><path d="M4 4h3.500v3.500H4zM8 8h3v3H8z" fill="#e0e0e0" stroke="none" /><path d="M8.500 4h2v2h-2z" fill="#333" stroke="none" /></Ico>
      </Tool>
    </ToolGroup>
  </ToolColumn>
);

const StatusBar = () => (
  <Status>
    <Cell $w={14} /><Cell $w={42}>100%</Cell><Cell $w={21}><Chevron /></Cell>
    <Cell $w={21}><Ico w={9} h={9}><path d="M1 0v9" strokeWidth="1.6" /><path d="M8 0v9L2.500 4.500z" fill={GLYPH} stroke="none" /></Ico></Cell>
    <Cell $w={18}><Ico w={7} h={9}><path d="M6 0v9L1 4.500z" fill={GLYPH} stroke="none" /></Ico></Cell>
    <Cell $w={103}><PageField>2<PageDrop><Chevron /></PageDrop></PageField></Cell>
    <Cell $w={20}><Ico w={7} h={9}><path d="M1 0v9L6 4.500z" fill={GLYPH} stroke="none" /></Ico></Cell>
    <Cell $w={24}><Ico w={9} h={9}><path d="M8 0v9" strokeWidth="1.6" /><path d="M1 0v9L6.500 4.500z" fill={GLYPH} stroke="none" /></Ico></Cell>
    <Cell $w={33}><Ico w={18} h={14}><path d="M3 11.500A5.500 5.500 0 1 1 12.500 7" strokeWidth="1.8" /><path d="M7 5l3.500-2.500Q12 4 12.500 8v3.500H10V6z" fill={GLYPH} stroke="none" /><path d="M14.500 12.500h2" strokeWidth="1.5" /></Ico></Cell>
    <Cell $w={102}>[Basic] (working)</Cell>
    <Cell $w={24}><Chevron /></Cell>
    <Cell $w={79}><Ok />No errors</Cell>
    <Cell $w={13}><Chevron color="#9a9a9a" /></Cell>
    <HTrack>
      <Chevron dir="left" color="#8a8a8a" />
      <HThumb />
      <Chevron dir="right" color="#b0b0b0" />
    </HTrack>
    <Cell $w={33}>
      <Ico w={33} h={14}><path d="M1.500 1.500h14v11h-14zM8.500 1.500v11" strokeWidth="1.3" /><path d="M23 12.500h8M25 10.500h6M27 8.500h4M29 6.500h2" strokeDasharray="1 1" stroke="#7d7d7d" /></Ico>
    </Cell>
  </Status>
);

const BoxedFrame = () => (
  <Ico w={21} h={16}><path d="M3 3.500h10v9H3z" /><path d="M1.500 2h3v3h-3zM11.500 2h3v3h-3zM1.500 11h3v3h-3zM11.500 11h3v3h-3zM7 2h2v2H7zM7 12h2v2H7z" fill={GLYPH} stroke="none" /><path d="M16 11.500h4.500L18.200 14z" fill={GLYPH} stroke="none" /></Ico>
);

const ALIGN = [
  'M1 0h1.200v18H1zM3 2h8v6H3zM3 10h13v5H3z',
  'M8.400 0h1.200v18H8.400zM5 2h8v6H5zM2.500 10h13v5h-13z',
  'M15.800 0H17v18h-1.200zM7 2h8v6H7zM2 10h13v5H2z',
  'M0 1h18v1.200H0zM3 3h5v13H3zM10 3h6v8h-6z',
  'M0 8.400h18v1.200H0zM3 2.500h5v13H3zM10 4.500h6v9h-6z',
  'M0 15.800h18V17H0zM3 2h5v13H3zM9.500 6h6v9h-6z',
];

const WrapIcon = ({ k }: { k: number }) => (
  <Ico w={16} h={14}>
    {k === 0 && <><path d="M1 1h14M1 4h14M1 7h14M1 10h14M1 13h14" /><path d="M5 4q3-2.500 6 0v6q-3 2.500-6 0z" fill={GLYPH} stroke="none" /><path d="M5 5.500h6M5 8.500h6" stroke="#2f2f2f" strokeWidth=".8" /></>}
    {k === 1 && <><path d="M1 1h14M1 13h14M1 4h2.500M1 7h2.500M1 10h2.500M12.500 4H15M12.500 7H15M12.500 10H15" /><path d="M5.500 3.500h5v7h-5z" /></>}
    {k === 2 && <><path d="M1 1h8M1 13h14M1 4h3M1 7h2M1 10h3M13 7h2M12.500 10H15" /><circle cx="8" cy="7.5" r="4" fill={GLYPH} stroke="none" /><circle cx="12.5" cy="3.8" r="3.8" fill="#2d8ceb" stroke="none" /></>}
    {k === 3 && <><path d="M1 1h14M1 10h14M1 13h14" /><path d="M5 3.500h6v4H5z" fill={GLYPH} stroke="none" /></>}
    {k === 4 && <><path d="M1 1h14M1 4h14" /><path d="M5 6.500h6v6H5z" fill={GLYPH} stroke="none" /></>}
  </Ico>
);

const FitIcon = ({ k }: { k: number }) => {
  const corners = 'M.6 .6h2v2h-2zM13.4 .6h2v2h-2zM.6 13.4h2v2h-2zM13.4 13.4h2v2h-2z';
  return (
    <Ico w={16}>
      {k === 0 && <><path d="M2 1h12v9H2z" fill={GLYPH} stroke="none" /><path d="M.6 .6h2v2h-2zM13.4 .6h2v2h-2zM.6 9.500h2v2h-2zM13.4 9.500h2v2h-2z" fill={PANEL} strokeWidth="1" /><path d="M1.500 14.500h13" strokeDasharray="2 1.5" /></>}
      {k > 0 && k < 5 && <path d="M1.600 1.600h12.800v12.800H1.600z" />}
      {k === 1 && <path d="M2 2h8v12H2z" fill={GLYPH} stroke="none" />}
      {k === 2 && <><path d="M2 2h6v6H2z" fill={GLYPH} stroke="none" /><path d="M8 6.500h5M6.500 8v5M11 4.500l2 2-2 2M4.500 11l2 2 2-2" strokeWidth="1" /></>}
      {k === 3 && <><path d="M2 2h6v6H2z" fill={GLYPH} stroke="none" /><path d="M10 6.500h4M6.500 10v4M12 4.500l-2 2 2 2M4.500 12l2-2 2 2" strokeWidth="1" /></>}
      {k === 4 && <path d="M5 5h6v6H5z" fill={GLYPH} stroke="none" />}
      {k === 5 && <><path d="M.6 .6h14.800v14.800H.6z" strokeDasharray="2 1.5" strokeWidth="1" /><path d="M4 4h8v8H4z" fill={GLYPH} stroke="none" /><path d="M3 3h2v2H3zM11 3h2v2h-2zM3 11h2v2H3zM11 11h2v2h-2z" fill={PANEL} strokeWidth="1" /></>}
      {k > 0 && k < 5 && <path d={corners} fill={PANEL} strokeWidth="1" />}
    </Ico>
  );
};

const MoreDots = ({ pt }: { pt?: number }) => <Dots $pt={pt}><i /><i /><i /></Dots>;
const Spinner = () => <Spin><Chevron dir="up" w={8} /><Chevron w={8} /></Spin>;

const Properties = () => (
  <Panel>
    <ColumnHeader $align="flex-end" $pad="0 6px"><DoubleChevron /></ColumnHeader>
    <Tabs>
      <Tab $w={78} $on>Properties</Tab>
      <Tab $w={54}>Pages</Tab>
      <Tab $w={82}>CC Libraries</Tab>
      <TabRest />
    </Tabs>
    <Section $h={34}><Title $h={30} $c={18}>Linked File</Title></Section>
    <Section $h={107}>
      <Title $h={32}>Transform</Title>
      <TransformGrid>
        <Span2 $col={1} $pl={6}>
          <Ico w={26}>
            <g strokeWidth="1"><path d="M3.500 3.500h18v18h-18zM12.500 3.500v18M3.500 12.500h18" />
              {[0, 1, 2].map((r) => [0, 1, 2].map((c) => (
                <rect key={`${r}${c}`} x={0.5 + c * 9} y={0.5 + r * 9} width="6" height="6" fill={r + c === 0 ? '#fff' : PANEL} stroke="#c8c8c8" />
              )))}
            </g>
          </Ico>
        </Span2>
        <Lbl $col={2} $row={1}>X:</Lbl><Field $col={3} $row={1}>26.05 cm</Field>
        <Lbl $col={4} $row={1}>W:</Lbl><Field $col={5} $row={1}>10.582 cm</Field>
        <Lbl $col={2} $row={2}>Y:</Lbl><Field $col={3} $row={2}>-1.6708 cm</Field>
        <Lbl $col={4} $row={2}>H:</Lbl><Field $col={5} $row={2}>9.6208 cm</Field>
        <Span2 $col={7}>
          <Ico w={13} h={15}><path d="M4 6V4q0-3 2.500-3T9 4v2.500M4 9v2q0 3 2.500 3T9 11V9.500M6.500 5v5M1 2.500l11 10" /></Ico>
        </Span2>
      </TransformGrid>
      <MoreDots />
    </Section>
    <Section $h={167}>
      <Title $h={29} $c={18}>Appearance</Title>
      <AttrRow><AttrIcon><NoneSwatch s={17} /></AttrIcon><AttrName><span>Fill</span></AttrName></AttrRow>
      <AttrRow>
        <AttrIcon><NoneSwatch s={17} inner /></AttrIcon>
        <AttrName $u={33}><span>Stroke</span></AttrName>
        <Combo $w={70}><Spinner /><Value>0 pt</Value><Drop><Chevron /></Drop></Combo>
        <Combo $w={55}><Preview><BlackBar /></Preview><Drop><Chevron /></Drop></Combo>
      </AttrRow>
      <AttrRow>
        <AttrIcon><Ico w={16}><path d="M4 4h8v8H4z" strokeDasharray="3 2" stroke="#9a9a9a" /><path d="M1 1.500h4.500v4.500H1zM10.500 1.500H15v4.500h-4.500zM1 10.500h4.500V15H1zM10.500 10.500H15V15h-4.500z" fill="#3c86d8" stroke="none" /></Ico></AttrIcon>
        <AttrName $u={34}><span>Corner</span></AttrName>
        <Combo $w={70}><Spinner /><Value>0.4233 cm</Value></Combo>
        <Combo $w={55}><Preview><CornerSample /></Preview><Drop><Chevron /></Drop></Combo>
      </AttrRow>
      <AttrRow>
        <AttrIcon><Ico w={16}><path d="M1.500 1.500h13v13h-13z" fill="#4a4a4a" stroke="#aaa" /><path d="M2 5h3v3H2zM5 2h3v3H5zM8 5h3v3H8zM11 2h3v3h-3zM5 8h3v3H5zM11 8h3v3h-3zM2 11h3v3H2zM8 11h3v3H8z" fill="#8d8d8d" stroke="none" /></Ico></AttrIcon>
        <AttrName $u={38}><span>Opacity</span></AttrName>
        <Combo $w={70}><Value>100%</Value><Drop><Chevron dir="right" w={10} /></Drop></Combo>
      </AttrRow>
      <AttrRow>
        <AttrIcon><Ico w={20} h={16}><path d="M4.500 3.500h11v11h-11z" strokeDasharray="4 1.5" /><path d="M16.500 12.500h3.500l-1.750 2z" fill={GLYPH} stroke="none" /></Ico></AttrIcon>
        <FxMark>fx.</FxMark>
      </AttrRow>
    </Section>
    <Section $h={63}>
      <Title $h={28}>Align</Title>
      <AlignStrip>
        <AlignRef><BoxedFrame /></AlignRef>
        {ALIGN.map((d, i) => (
          <svg key={i} width="18" height="18" viewBox="0 0 18 18" fill={GLYPH}><path d={d} /></svg>
        ))}
      </AlignStrip>
    </Section>
    <Section $h={86}>
      <Title $h={32}>Text Wrap</Title>
      <IconStrip $h={22} $cols="24px 36px 24px 36px 24px 25px 60px">
        {[0, 1, 2, 3, 4].map((k) => <WrapBtn key={k} $on={k === 0}><WrapIcon k={k} /></WrapBtn>)}
        <Check $dim />
        <Muted>Invert</Muted>
      </IconStrip>
      <MoreDots pt={4} />
    </Section>
    <Section $h={92}>
      <Title $h={33} $c={18}>Frame Fitting</Title>
      <IconStrip $h={21} $cols="24px 26px 24px 26px 24px 26px 70px">
        {[0, 1, 2, 3, 4, 5].map((k) => <FitIcon key={k} k={k} />)}
        <OptionsBtn>Options</OptionsBtn>
      </IconStrip>
      <AutoFit><Check />Auto-Fit</AutoFit>
    </Section>
    <Section $h={200} $last>
      <Title $h={28} $c={13}>Quick Actions</Title>
      <BtnGrid>
        <Btn>Convert Shape</Btn><Btn>Arrange</Btn>
        <Btn>Import File</Btn><Btn>Embed</Btn>
        <Btn>Edit With</Btn><Btn>Reveal in Explorer</Btn>
        <Btn $wide>Find Similar Images</Btn>
      </BtnGrid>
    </Section>
  </Panel>
);

const Apps = () => (
  <AppRow>
    <AppSlot><svg width="23" height="23"><defs><linearGradient id="wn" x2="1" y2="1"><stop offset="0" stopColor="#7fdcff" /><stop offset="1" stopColor="#1aa0f5" /></linearGradient></defs><path d="M0 0h11v11H0zM12 0h11v11H12zM0 12h11v11H0zM12 12h11v11H12z" fill="url(#wn)" /></svg></AppSlot>
    <AppSlot><svg width="24" height="24" fill="none"><circle cx="14" cy="10" r="8.5" fill="#4a4470" stroke="#e9e6f0" strokeWidth="2.2" /><path d="M8 16.500L2.500 22" stroke="#e9e6f0" strokeWidth="2.8" strokeLinecap="round" /></svg></AppSlot>
    <AppSlot><svg width="24" height="24"><path d="M0 7h17v16H0z" fill="#5e5e5e" /><path d="M7 1h17v16H7z" fill="#f0f0f0" /><path d="M7 7h10v10H7z" fill="#ababab" /></svg></AppSlot>
    <AppSlot><svg width="24" height="24"><rect y=".5" width="24" height="23" rx="1.5" fill="#1c64a8" /><rect x="2" y="3" width="9.5" height="18" rx="1" fill="#fff" /><rect x="13.5" y="3" width="8.5" height="10" rx="1" fill="#5bd0fb" /><rect x="13.5" y="13" width="8.5" height="8" rx="1" fill="#1687e0" /></svg></AppSlot>
    <AppSlot><svg width="24" height="24"><path d="M12 1a11 11 0 1 1-6 20.300L1 23l1.200-5.500A11 11 0 0 1 12 1z" fill="#6b69c8" /><rect x="5.500" y="7.500" width="9" height="9" rx="1.5" fill="#fff" /><path d="M15.500 10.500l3-2.500v8l-3-2.500z" fill="#fff" /></svg></AppSlot>
    <AppSlot $run><svg width="23" height="23" viewBox="0 0 24 24"><circle cx="12" cy="12" r="11.5" fill="#fbc116" /><path d="M12 .5A11.500 11.500 0 0 1 22.200 6.600H12L7 14.500 2 6.200A11.500 11.500 0 0 1 12 .5z" fill="#d9453a" /><path d="M2 6.200L7.200 15 12 17.500l-2 5.900A11.500 11.500 0 0 1 2 6.200z" fill="#259b51" /><circle cx="12" cy="12" r="5.6" fill="#fff" /><circle cx="12" cy="12" r="4.3" fill="#4087ee" /></svg></AppSlot>
    <AppSlot><svg width="24" height="24"><path d="M0 3q0-1.500 1.500-1.500H9L11 4v3H0z" fill="#e0a21b" /><rect y="4" width="24" height="19" rx="1" fill="#fcc934" /><path d="M4 23v-5q0-2 2-2h12q2 0 2 2v5z" fill="#0f72c4" /><path d="M8 19h8" stroke="#0a4f94" /></svg></AppSlot>
    <AppSlot><svg width="24" height="24"><path d="M6.500 6V2.500q0-1 1-1h9q1 0 1 1V6" fill="none" stroke="#4cb2e8" strokeWidth="2" /><path d="M.5 5.500h23v15q0 3-3 3h-17q-3 0-3-3z" fill="#f1f1f3" /><path d="M7.500 9.500h4v4h-4z" fill="#e8502a" /><path d="M12.500 9.500h4v4h-4z" fill="#7db928" /><path d="M7.500 14.500h4v4h-4z" fill="#1a9fe0" /><path d="M12.500 14.500h4v4h-4z" fill="#f9b917" /></svg></AppSlot>
    <AppSlot><svg width="25" height="24"><path d="M.5 9L12.500 1 24.500 9v14H.5z" fill="#1e60a8" /><path d="M3 8.500h19L12.500 17z" fill="#f3f7fb" /><path d="M.5 9L24.500 23H.5z" fill="#2fa7ea" /><path d="M24.500 9v14L13 15.500z" fill="#1b87d4" /><path d="M24.500 9L.5 23h4L24.500 11z" fill="#35bdf3" /></svg></AppSlot>
    <AppSlot $active><AppBadge $s={22} $bg="#49021f" $fg="#ff3366" $f={13}>Id</AppBadge></AppSlot>
    <AppSlot $run>
      <svg width="22" height="22"><defs><linearGradient id="c1" x2="1" y2="1"><stop offset="0" stopColor="#e8172c" /><stop offset=".35" stopColor="#e93a9c" /><stop offset=".65" stopColor="#f4a32a" /><stop offset="1" stopColor="#3fb54a" /></linearGradient><linearGradient id="c2" x1="1" y1="0" x2="0" y2="1"><stop offset="0" stopColor="#f59d23" /><stop offset=".4" stopColor="#f59d23" stopOpacity="0" /><stop offset=".6" stopColor="#3577e8" stopOpacity="0" /><stop offset="1" stopColor="#3577e8" /></linearGradient></defs><rect width="22" height="22" rx="4" fill="url(#c1)" /><rect width="22" height="22" rx="4" fill="url(#c2)" /><g fill="none" stroke="#fff" strokeWidth="1.3"><circle cx="7.8" cy="11.5" r="4" /><circle cx="13" cy="10.2" r="5.2" /><path d="M6 11.500l3.500 3.500h4q3-.5 3-4.500t-4-3.500L8 12" /></g></svg>
    </AppSlot>
    <AppSlot $run><AppBadge $s={22} $bg="#001e36" $fg="#31a8ff" $f={12.5}>Ps</AppBadge></AppSlot>
  </AppRow>
);

export default function App() {
  return (
    <Desktop>
      <Global />
      <PsWindow>
        <PsTop>
          <PsLogo>Ps</PsLogo>
          {PS_MENU.map(([t, w]) => <PsItem key={t} $w={w}>{t}</PsItem>)}
          <PsButtons>
            <span />
            <svg width="12" height="10" fill="none" stroke="#b0b0b0" strokeWidth="1.6"><path d="M4 3V1h7v6H9M1 4h7v5H1z" /></svg>
            <svg width="10" height="10" stroke="#b0b0b0" strokeWidth="2"><path d="M1 1l8 8M9 1L1 9" /></svg>
          </PsButtons>
        </PsTop>
        <PsMiddle>
          <PsStrip>
            <Seg $h={34} $line><Gripper /></Seg>
            <Seg $h={12} $bg={DARK} $line><Chevron dir="right" /></Seg>
            <Seg $h={18} $line />
            <Seg $h={25} $bg="#454545" $line />
            <Seg $h={552} />
            <Seg $h={12}><PsColorChip $h={9} /></Seg>
            <Seg $h={24}><PsColorChip $h={18} /></Seg>
            <Seg />
          </PsStrip>
          <PsStrip>
            <Seg $h={34} $line />
            <Seg $h={12} $bg={DARK} $line><DoubleChevron /></Seg>
            <Seg $h={28} $bg="#484848" $line><Burger /></Seg>
            <Seg $h={129} $line />
            <Seg $h={30} $bg="#484848" $line><Burger /></Seg>
            <Seg $h={34} $line />
            <Seg $h={18} $bg="#484848" $line><Chevron dir="up" /></Seg>
            <Seg $h={192} $bg="#484848"><PsThumb /></Seg>
            <Seg $h={76} $bg="#484848" />
            <Seg $h={12} $bg="#484848"><Chevron color="#9a9a9a" /></Seg>
            <Seg $h={29} />
            <Seg $h={29} $bg="#454545" $line><Burger /></Seg>
            <Seg $h={32} $line />
            <Seg $h={28} $line />
            <Seg $h={31} $line />
            <Seg $bg="#484848" />
          </PsStrip>
        </PsMiddle>
        <PsBottom>
          <PsZoom>100%</PsZoom>
          <PsInfo>1200 px x 1091 px (72 ppi)<Chevron dir="right" /></PsInfo>
          <PsTrack>
            <Chevron dir="left" color="#a0a0a0" />
            <PsTrackThumb />
            <Chevron dir="right" color="#a0a0a0" />
          </PsTrack>
          <PsFooterIcons>
            {[11, 13, 12, 12, 11, 9].map((w, i) => (
              <svg key={i} width={w} height="6"><path d={i === 4 ? `M.8 0V4H${w - 1}V0` : i === 5 ? `M0 1.500H${w}M0 3.500H${w}` : `M0 3H${w}`} stroke="#c8c8c8" strokeWidth="1.5" strokeDasharray={i === 0 || i === 5 ? '2 1' : 'none'} fill="none" /></svg>
            ))}
          </PsFooterIcons>
        </PsBottom>
      </PsWindow>

      <Window>
        <TitleBar>
          <AppBadge $s={14} $bg="#49021f" $fg="#ff3366" $f={8}>Id</AppBadge>
          <HomeIcon width="18" height="15" viewBox="0 0 18 15"><path d="M9 0L0 8h2v7h5v-5h4v5h5V8h2z" fill="#d2d2d2" /></HomeIcon>
          {MENU.map(([t, w]) => <MenuItem key={t} $w={w}>{t}</MenuItem>)}
          <TitleRight>
            <Ico w={14} h={19}><path d="M5 14.500Q4.800 12 3 10.500Q.8 8.500 .8 6.200A6.200 5.700 0 0 1 13.200 6.200Q13.200 8.500 11 10.500Q9.200 12 9 14.500z" strokeWidth="1.4" /><path d="M5 14.500h4v3l-2 1.500-2-1.500z" fill={GLYPH} stroke="none" /></Ico>
            <ShareSlot>
              <Ico w={17} h={17}><path d="M5 6.500H1.200V16h14.600V6.500H12" strokeWidth="1.7" /><path d="M8.500 12V3" strokeWidth="1.7" /><path d="M8.500 0l4 4.500h-8z" fill={GLYPH} stroke="none" /></Ico>
            </ShareSlot>
            <Divider $m="0 12px 0 16px" />
            <Workspace>Essentials</Workspace>
            <Chevron w={10} />
            <Divider $m="0 9px 0 13px" />
            <StockSearch>
              <svg width="18" height="12" fill="none" stroke="#3f8ce0" strokeWidth="1.3"><circle cx="8" cy="4.5" r="3.7" /><path d="M5.500 7.500L1 11.500" /><path d="M11.500 7.500h6l-3 3z" fill="#3f8ce0" stroke="none" /></svg>
              Adobe Stock
            </StockSearch>
            <WinButtons>
              <div><svg width="10" height="9"><path d="M0 7h10" stroke="#c8c8c8" strokeWidth="3" /></svg></div>
              <div><svg width="10" height="9"><path d="M1 1h8v6.500H1z" stroke="#c8c8c8" strokeWidth="2" fill="none" /></svg></div>
              <div><svg width="10" height="9"><path d="M1 .5l8 8M9 .5l-8 8" stroke="#c8c8c8" strokeWidth="1.8" /></svg></div>
            </WinButtons>
          </TitleRight>
        </TitleBar>
        <Body>
          <ToolsPanel />
          <Doc>
            <TabBar>
              <DocTab>*menukaart.indd @ 100%<svg width="8" height="8" stroke="#f0f0f0" strokeWidth="2"><path d="M1 1l6 6M7 1L1 7" /></svg></DocTab>
            </TabBar>
            <View>
              <RulerCorner />
              <HRuler>
                <Ticks width="2164" height="15"><path d={hTicks()} stroke="#a2a2a2" /></Ticks>
                <HLabels>
                  {Array.from({ length: 57 }, (_, i) => i - 14).map((n) => <HLabel key={n}>{Math.abs(n)}</HLabel>)}
                </HLabels>
              </HRuler>
              <VScroll><Chevron dir="up" color="#9a9a9a" /><VThumb /><Chevron color="#9a9a9a" /></VScroll>
              <VerticalRuler />
              <Canvas><Artwork /></Canvas>
              <StatusBar />
            </View>
          </Doc>
          <Dock>
            <ColumnHeader $align="flex-end"><DoubleChevron flip /></ColumnHeader>
            <DockIcons>
              <Gripper />
              <DockIcon $mt={6}><Ico w={18} h={18}><path d="M9 0l8.500 5.500L9 11 .5 5.500z" fill={GLYPH} stroke="none" /><path d="M1.200 10.500L9 15.800l7.800-5.300" strokeWidth="2.6" /></Ico></DockIcon>
              <DockIcon $mt={8}><Ico w={20} h={10}><path d="M9 2.200Q7.500 1 5.500 1 1 1 1 5t4.500 4q3.500 0 5-4M11 7.800Q12.500 9 14.500 9 19 9 19 5t-4.500-4Q11 1 9.500 5" strokeWidth="1.8" /></Ico></DockIcon>
            </DockIcons>
          </Dock>
          <Properties />
        </Body>
      </Window>

      <Taskbar>
        <Apps />
        <Tray>
          <svg width="12" height="8" fill="none" stroke="#eee" strokeWidth="1.3"><path d="M1 7l5-5 5 5" /></svg>
          <svg width="17" height="14"><path d="M4 12q-3.500 0-3.500-3T4 6q1-4 5-4 3 0 4 3.500 3.500 0 3.500 3.500T13 12z" fill="#8f7f97" /><path d="M2 1l13 12" stroke="#fff" strokeWidth="1.2" /></svg>
          <svg width="17" height="12" fill="none" stroke="#f0f0f0"><rect x=".5" y=".5" width="16" height="11" rx="1.5" /><path d="M3 3.500h11M3 6h11" strokeDasharray="1.5 1.5" /><path d="M4.500 9h8" /></svg>
          <span>ENG</span>
          <svg width="17" height="17" fill="none" stroke="#f0f0f0" strokeWidth="1.2"><path d="M11 3H1v10h13V8M4 16h8M7.500 13v3" /><path d="M12.500 1h4v4.500h-4zM14.500 5.500V8" /></svg>
          <svg width="17" height="14" fill="none" stroke="#f0f0f0" strokeWidth="1.2"><path d="M1 5v4h2.500L7 12.500v-11L3.500 5z" /><path d="M9.500 4.500q2 2.500 0 5M11.800 2.800q3.200 4.200 0 8.400M14 1q4.200 6 0 12" /></svg>
          <Clock>12:49 PM<br />12/10/2021</Clock>
          <Badge>3</Badge>
        </Tray>
      </Taskbar>
    </Desktop>
  );
}
